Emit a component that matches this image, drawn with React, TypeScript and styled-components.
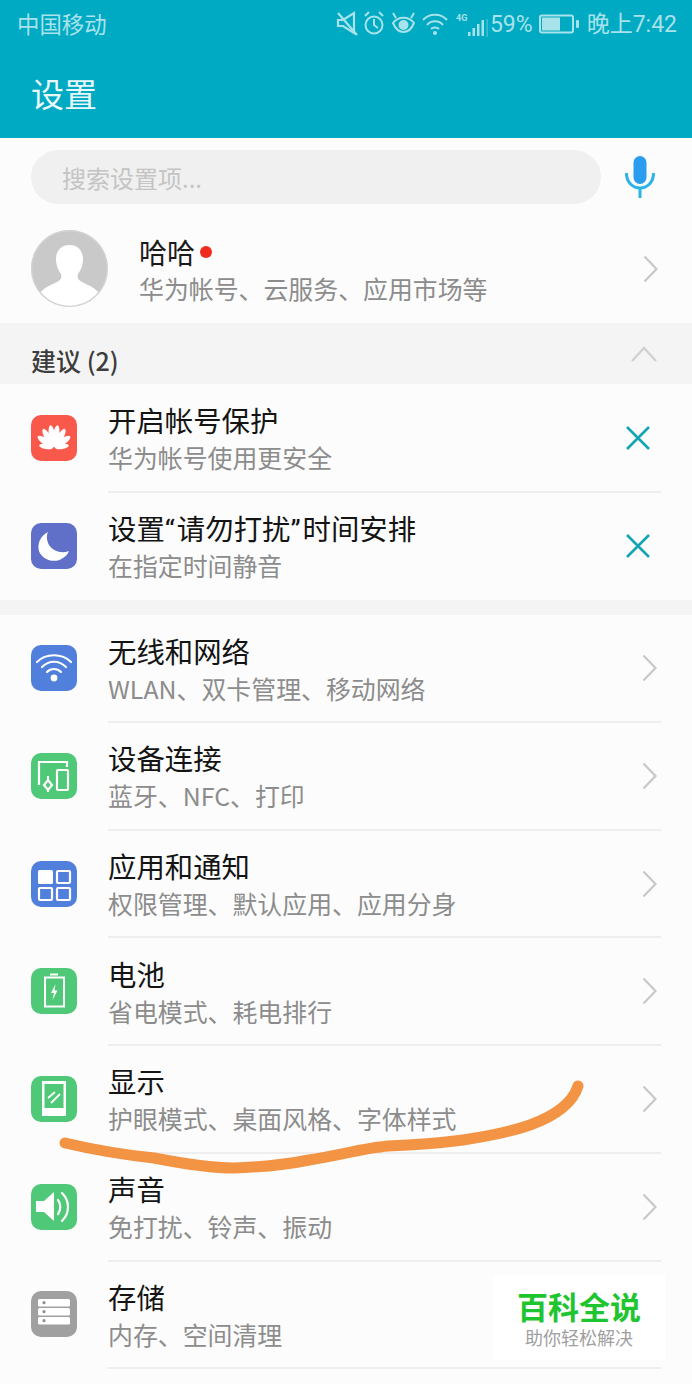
import React from 'react';
import styled, { createGlobalStyle } from 'styled-components';

const GlobalStyle = createGlobalStyle`
  html, body {
    margin: 0;
    padding: 0;
    background: #fcfcfc;
  }
  body {
    font-family: "Noto Sans CJK SC", "Noto Sans", sans-serif;
    overflow: hidden;
  }
`;

const Page = styled.div`
  position: relative;
  width: 692px;
  height: 1384px;
  overflow: hidden;
  background: #fcfcfc;
`;

const TopBar = styled.header`
  height: 138px;
  background: #00aac2;
  display: flex;
  flex-direction: column;
`;

const StatusBar = styled.div`
  height: 48px;
  padding: 0 15px 0 17px;
  display: flex;
  align-items: center;
  justify-content: space-between;
  color: #a8e2ea;
`;

const StatusText = styled.span`
  font-size: 22.4px;
  line-height: 48px;
  white-space: nowrap;
`;

const Carrier = styled(StatusText)`
  padding-bottom: 3px;
`;

const StatusNumber = styled(StatusText)`
  font-family: "Roboto", "Noto Sans CJK SC", sans-serif;
  font-size: 23px;
  padding-top: 2px;
`;

const StatusGroup = styled.div`
  display: flex;
  align-items: center;
  gap: 6px;
`;

const StatusSvg = styled.svg`
  overflow: visible;
  margin-right: 1px;
`;

const Title = styled.h1`
  margin: 0;
  padding: 0 0 0 31px;
  font-size: 33px;
  line-height: 90px;
  font-weight: 400;
  color: #e9f8fa;
  height: 90px;
`;

const SearchRow = styled.div`
  height: 54px;
  padding: 12px 37px 0 31px;
  display: flex;
  align-items: center;
  justify-content: space-between;
`;

const SearchBox = styled.div`
  width: 570px;
  height: 54px;
  border-radius: 27px;
  background: #f0f0f0;
  padding-left: 31px;
  box-sizing: border-box;
  display: flex;
  align-items: center;
  font-size: 24px;
  color: #c4c4c4;
`;

const ProfileRow = styled.div`
  height: 119px;
  padding: 10px 34px 0 31px;
  display: flex;
  align-items: center;
  box-sizing: border-box;
`;

const ProfileText = styled.div`
  flex: 1;
  margin-left: 31px;
  padding-top: 3px;
`;

const NameLine = styled.div`
  display: flex;
  align-items: center;
  font-size: 28px;
  line-height: 36px;
  color: #1a1a1a;
`;

const RedDot = styled.span`
  width: 12px;
  height: 12px;
  margin-left: 5px;
  border-radius: 50%;
  background: #ee2d1f;
`;

const SectionHeader = styled.div`
  height: 61px;
  padding: 0 35px 0 31px;
  background: #f4f4f4;
  box-sizing: border-box;
  display: flex;
  align-items: center;
  justify-content: space-between;
  font-size: 25px;
  font-weight: 500;
  color: #3c3c3c;
`;

const SectionLabel = styled.span`
  padding-top: 12px;
`;

const SuggestionList = styled.section`
  padding-top: 1px;
`;

const Gap = styled.div`
  height: 15px;
  background: #f4f4f4;
`;

const Row = styled.div`
  height: 107.7px;
  padding-left: 31px;
  display: flex;
  align-items: center;
`;

const Tile = styled.div<{ $bg: string }>`
  width: 46px;
  height: 46px;
  flex: none;
  border-radius: 10px;
  background: ${(p) => p.$bg};
  display: flex;
  margin-bottom: 2px;
`;

const RowBody = styled.div<{ $line: boolean }>`
  flex: 1;
  height: 100%;
  box-sizing: border-box;
  margin: 0 31px;
  padding-right: 4px;
  display: flex;
  align-items: center;
  justify-content: space-between;
  border-bottom: ${(p) => (p.$line ? '2px solid #eeeeee' : '2px solid transparent')};
`;

const RowTitle = styled.div`
  font-size: 28.4px;
  line-height: 38px;
  padding-top: 1px;
  color: #141414;
  white-space: nowrap;
`;

const RowSub = styled.div`
  font-size: 24.9px;
  line-height: 36px;
  color: #8c8c8c;
  white-space: nowrap;
`;

const Quote = styled.span`
  font-family: "Roboto", sans-serif;
  letter-spacing: 2px;
  line-height: 1;
`;

const DismissButton = styled.div`
  display: flex;
  margin-right: 7px;
`;

const Watermark = styled.div`
  position: absolute;
  left: 493px;
  top: 1275px;
  width: 172px;
  height: 85px;
  background: #ffffff;
  display: flex;
  flex-direction: column;
  align-items: center;
  justify-content: center;
`;

const WatermarkTitle = styled.div`
  font-size: 31px;
  line-height: 38px;
  font-weight: 700;
  color: #1fc52f;
`;

const WatermarkSub = styled.div`
  font-size: 18px;
  line-height: 24px;
  color: #a0a0a0;
`;

const Scribble = styled.svg`
  position: absolute;
  left: 0;
  top: 0;
  pointer-events: none;
`;

const Glyph = ({ children }: { children: React.ReactNode }) => (
  <svg width="46" height="46" viewBox="0 0 46 46">
    {children}
  </svg>
);

const Chevron = () => (
  <svg width="15" height="28" viewBox="0 0 15 28" fill="none" stroke="#c8c8c8" strokeWidth="2.2">
    <path d="M1.5 1.5 L13.5 14 L1.5 26.5" />
  </svg>
);

const CloseX = () => (
  <svg width="24" height="24" viewBox="0 0 24 24" stroke="#14a5b4" strokeWidth="2.6">
    <path d="M1 1 L23 23 M23 1 L1 23" />
  </svg>
);

const petals = [
  { angle: -9, len: 22 },
  { angle: 9, len: 22 },
  { angle: -30, len: 21 },
  { angle: 30, len: 21 },
  { angle: -54, len: 19 },
  { angle: 54, len: 19 },
  { angle: -80, len: 14 },
  { angle: 80, len: 14 },
];

const HuaweiGlyph = () => (
  <Glyph>
    {petals.map(({ angle, len }) => (
      <ellipse
        key={angle}
        cx="23"
        cy={33 - len / 2 - 1}
        rx={len > 15 ? 3.2 : 2.4}
        ry={len / 2}
        fill="#fff"
        transform={`rotate(${angle} 23 33)`}
      />
    ))}
  </Glyph>
);

const MoonGlyph = () => (
  <Glyph>
    <path d="M17 9 C9 13 6 21 8 28 C11 37 24 41 32 35 C35 33 37 31 38 28 C30 31 22 28 18 22 C16 18 15 13 17 9 Z" fill="#fff" />
  </Glyph>
);

const WifiGlyph = () => (
  <Glyph>
    <g fill="none" stroke="#fff" strokeWidth="2.2" strokeLinecap="round">
      <path d="M6 17 C15 8 31 8 40 17" />
      <path d="M11 22 C18 15 28 15 35 22" />
      <path d="M16 27 C20 23 26 23 30 27" />
    </g>
    <circle cx="23" cy="33" r="3.4" fill="#fff" />
  </Glyph>
);

const DevicesGlyph = () => (
  <Glyph>
    <g fill="none" stroke="#fff" strokeWidth="2.2">
      <path d="M8 32 V9 H36 V14" />
      <rect x="26" y="17" width="11" height="20" rx="1" />
      <path d="M17 27 L21 32 L17 37 L13 32 Z" />
    </g>
    <path d="M17 23 V27 M17 37 V39" stroke="#fff" strokeWidth="2" />
  </Glyph>
);

const AppsGlyph = () => (
  <Glyph>
    <rect x="7" y="9" width="15" height="14" rx="1.5" fill="#fff" />
    <g fill="none" stroke="#fff" strokeWidth="2.2">
      <rect x="26" y="10" width="13" height="12" rx="1" />
      <rect x="8" y="27" width="13" height="12" rx="1" />
      <rect x="26" y="27" width="13" height="12" rx="1" />
    </g>
  </Glyph>
);

const BatteryGlyph = () => (
  <Glyph>
    <rect x="19" y="5.5" width="8" height="2" fill="#fff" />
    <rect x="14" y="9.5" width="19" height="29" fill="none" stroke="#fff" strokeWidth="2" />
    <path d="M24.5 16 L20 25 H23 L21.5 32 L26.5 22.5 H23.5 Z" fill="#fff" />
  </Glyph>
);

const DisplayGlyph = () => (
  <Glyph>
    <rect x="11" y="5" width="24" height="35" fill="#fff" />
    <rect x="13.5" y="8" width="19" height="24" fill="#4fc878" />
    <path d="M17 22 L24 16 M20 27 L29 18" stroke="#fff" strokeWidth="1.8" />
  </Glyph>
);

const SoundGlyph = () => (
  <Glyph>
    <path d="M5 17 H13 L23 8 V37 L13 28 H5 Z" fill="#fff" />
    <g fill="none" stroke="#fff" strokeWidth="2.2" strokeLinecap="round">
      <path d="M27 16 C30 20 30 26 27 30" />
      <path d="M31 9 C39 17 39 29 31 37" />
    </g>
  </Glyph>
);

const StorageGlyph = () => (
  <Glyph>
    {[8, 17, 26].map((y) => (
      <g key={y}>
        <rect x="7" y={y} width="32" height="7.5" rx="1.5" fill="#fff" />
        <circle cx="13" cy={y + 3.7} r="1.6" fill="#909090" />
      </g>
    ))}
  </Glyph>
);

const MicIcon = () => (
  <svg width="30" height="42" viewBox="0 0 30 42" fill="none">
    <rect x="8.5" y="0" width="13" height="28" rx="6.5" fill="#2b9df0" />
    <path d="M1.5 17 C1.5 37 28.5 37 28.5 17" stroke="#2ab4e8" strokeWidth="3" />
    <path d="M15 32 V42" stroke="#2ab4e8" strokeWidth="3" />
  </svg>
);

const ChevronUp = () => (
  <svg width="26" height="16" viewBox="0 0 26 16" fill="none" stroke="#d0d0d0" strokeWidth="2.4">
    <path d="M1 15 L13 2 L25 15" />
  </svg>
);

const Avatar = () => (
  <svg width="77" height="77" viewBox="0 0 77 77">
    <defs>
      <clipPath id="avatar-clip">
        <circle cx="38.5" cy="38.5" r="38" />
      </clipPath>
    </defs>
    <circle cx="38.5" cy="38.5" r="38.5" fill="#c9c9c9" />
    <g clipPath="url(#avatar-clip)" fill="#fff">
      <path d="M38.5 15 C30 15 25 21 25 29 C25 35 27 40 30 44 C31 48 30 50 26 52 C20 55 14 57 10 62 L5 77 H72 L67 62 C63 57 57 55 51 52 C47 50 46 48 47 44 C50 40 52 35 52 29 C52 21 47 15 38.5 15 Z" />
    </g>
    <circle cx="38.5" cy="38.5" r="37.8" fill="none" stroke="#d4d4d4" strokeWidth="1.2" />
  </svg>
);

const StatusIcons = () => (
  <StatusSvg width="147" height="34" viewBox="0 0 147 34" fill="none" stroke="#a8e2ea" strokeWidth="2">
    {/* muted speaker */}
    <path d="M2 13 H7 L18 6 V26 L7 19 H2 Z" strokeWidth="2.2" />
    <path d="M2 6 L21 28" strokeWidth="2.2" />
    {/* alarm */}
    <circle cx="38" cy="18" r="8.5" />
    <path d="M38 12 V18 L42 21" />
    <path d="M29 9 L33 5 M47 9 L43 5" />
    {/* eye */}
    <path d="M57 16 C62 9 73 9 78 16 C73 28 62 28 57 16 Z" />
    <circle cx="67.5" cy="18" r="4" fill="#a8e2ea" />
    <path d="M57 6 L60 11 M78 6 L75 11" />
    {/* wifi */}
    <path d="M87 13 C93 6 105 6 111 13 M91 18 C95 13 103 13 107 18 M95 22 C97 20 101 20 103 22" />
    <circle cx="99" cy="26" r="2" fill="#a8e2ea" stroke="none" />
    {/* network type and signal */}
    <text x="120" y="14" fontSize="9" fontWeight="700" fontFamily="Roboto, sans-serif" fill="#a8e2ea" stroke="none">
      4G
    </text>
    <rect x="132" y="25" width="2.5" height="4" fill="#a8e2ea" stroke="none" />
    <rect x="136.5" y="21" width="2.5" height="8" fill="#a8e2ea" stroke="none" />
    <rect x="141" y="17" width="2.5" height="12" fill="#a8e2ea" stroke="none" />
    <rect x="145.5" y="13" width="2.5" height="16" fill="#a8e2ea" stroke="none" />
    <rect x="150.5" y="12" width="1.2" height="18" fill="#a8e2ea" fillOpacity="0.5" stroke="none" />
  </StatusSvg>
);

const BatteryIcon = () => (
  <svg width="42" height="20" viewBox="0 0 42 20" fill="none">
    <rect x="1" y="1.5" width="33" height="17" rx="2" stroke="#a8e2ea" strokeWidth="2" />
    <rect x="3" y="3.5" width="18" height="13" fill="#a8e2ea" />
    <rect x="37" y="6" width="3" height="8" rx="1" fill="#a8e2ea" />
  </svg>
);

interface SettingItem {
  title: React.ReactNode;
  sub: string;
  bg: string;
  glyph: React.ReactNode;
}

const suggestions: SettingItem[] = [
  { title: '开启帐号保护', sub: '华为帐号使用更安全', bg: '#f8594a', glyph: <HuaweiGlyph /> },
  {
    title: (
      <>
        设置<Quote>“</Quote>请勿打扰<Quote>”</Quote>时间安排
      </>
    ),
    sub: '在指定时间静音',
    bg: '#6070c8',
    glyph: <MoonGlyph />,
  },
];

const settings: SettingItem[] = [
  { title: '无线和网络', sub: 'WLAN、双卡管理、移动网络', bg: '#5080dc', glyph: <WifiGlyph /> },
  { title: '设备连接', sub: '蓝牙、NFC、打印', bg: '#4fc878', glyph: <DevicesGlyph /> },
  { title: '应用和通知', sub: '权限管理、默认应用、应用分身', bg: '#5080dc', glyph: <AppsGlyph /> },
  { title: '电池', sub: '省电模式、耗电排行', bg: '#4fc878', glyph: <BatteryGlyph /> },
  { title: '显示', sub: '护眼模式、桌面风格、字体样式', bg: '#4fc878', glyph: <DisplayGlyph /> },
  { title: '声音', sub: '免打扰、铃声、振动', bg: '#4fc878', glyph: <SoundGlyph /> },
  { title: '存储', sub: '内存、空间清理', bg: '#a0a0a0', glyph: <StorageGlyph /> },
];

export default function App() {
  return (
    <Page>
      <GlobalStyle />
      <TopBar>
        <StatusBar>
          <Carrier>中国移动</Carrier>
          <StatusGroup>
            <StatusIcons />
            <StatusNumber>59%</StatusNumber>
            <BatteryIcon />
            <StatusNumber>晚上7:42</StatusNumber>
          </StatusGroup>
        </StatusBar>
        <Title>设置</Title>
      </TopBar>

      <SearchRow>
        <SearchBox>搜索设置项...</SearchBox>
        <MicIcon />
      </SearchRow>

      <ProfileRow>
        <Avatar />
        <ProfileText>
          <NameLine>
            哈哈
            <RedDot />
          </NameLine>
          <RowSub>华为帐号、云服务、应用市场等</RowSub>
        </ProfileText>
        <Chevron />
      </ProfileRow>

      <SectionHeader>
        <SectionLabel>建议 (2)</SectionLabel>
        <ChevronUp />
      </SectionHeader>

      <SuggestionList>
        {suggestions.map((item, i) => (
          <Row key={i}>
            <Tile $bg={item.bg}>{item.glyph}</Tile>
            <RowBody $line={i === 0}>
              <div>
                <RowTitle>{item.title}</RowTitle>
                <RowSub>{item.sub}</RowSub>
              </div>
              <DismissButton>
                <CloseX />
              </DismissButton>
            </RowBody>
          </Row>
        ))}
      </SuggestionList>

      <Gap />

      {settings.map((item, i) => (
        <Row key={i}>
          <Tile $bg={item.bg}>{item.glyph}</Tile>
          <RowBody $line>
            <div>
              <RowTitle>{item.title}</RowTitle>
              <RowSub>{item.sub}</RowSub>
            </div>
            <Chevron />
          </RowBody>
        </Row>
      ))}

      <Watermark>
        <WatermarkTitle>百科全说</WatermarkTitle>
        <WatermarkSub>助你轻松解决</WatermarkSub>
      </Watermark>

      <Scribble width="692" height="1384" viewBox="0 0 692 1384" fill="none">
        <path
          d="M65 1143 C95 1150 125 1155 154 1158 C185 1164 210 1168 234 1168 C262 1167 285 1165 309 1160 C340 1155 365 1148 388 1146 C415 1145 440 1143 463 1140 C490 1136 510 1132 530 1125 C552 1117 572 1105 578 1086"
          stroke="#f39344"
          strokeWidth="11"
          strokeLinecap="round"
        />
      </Scribble>
    </Page>
  );
}
